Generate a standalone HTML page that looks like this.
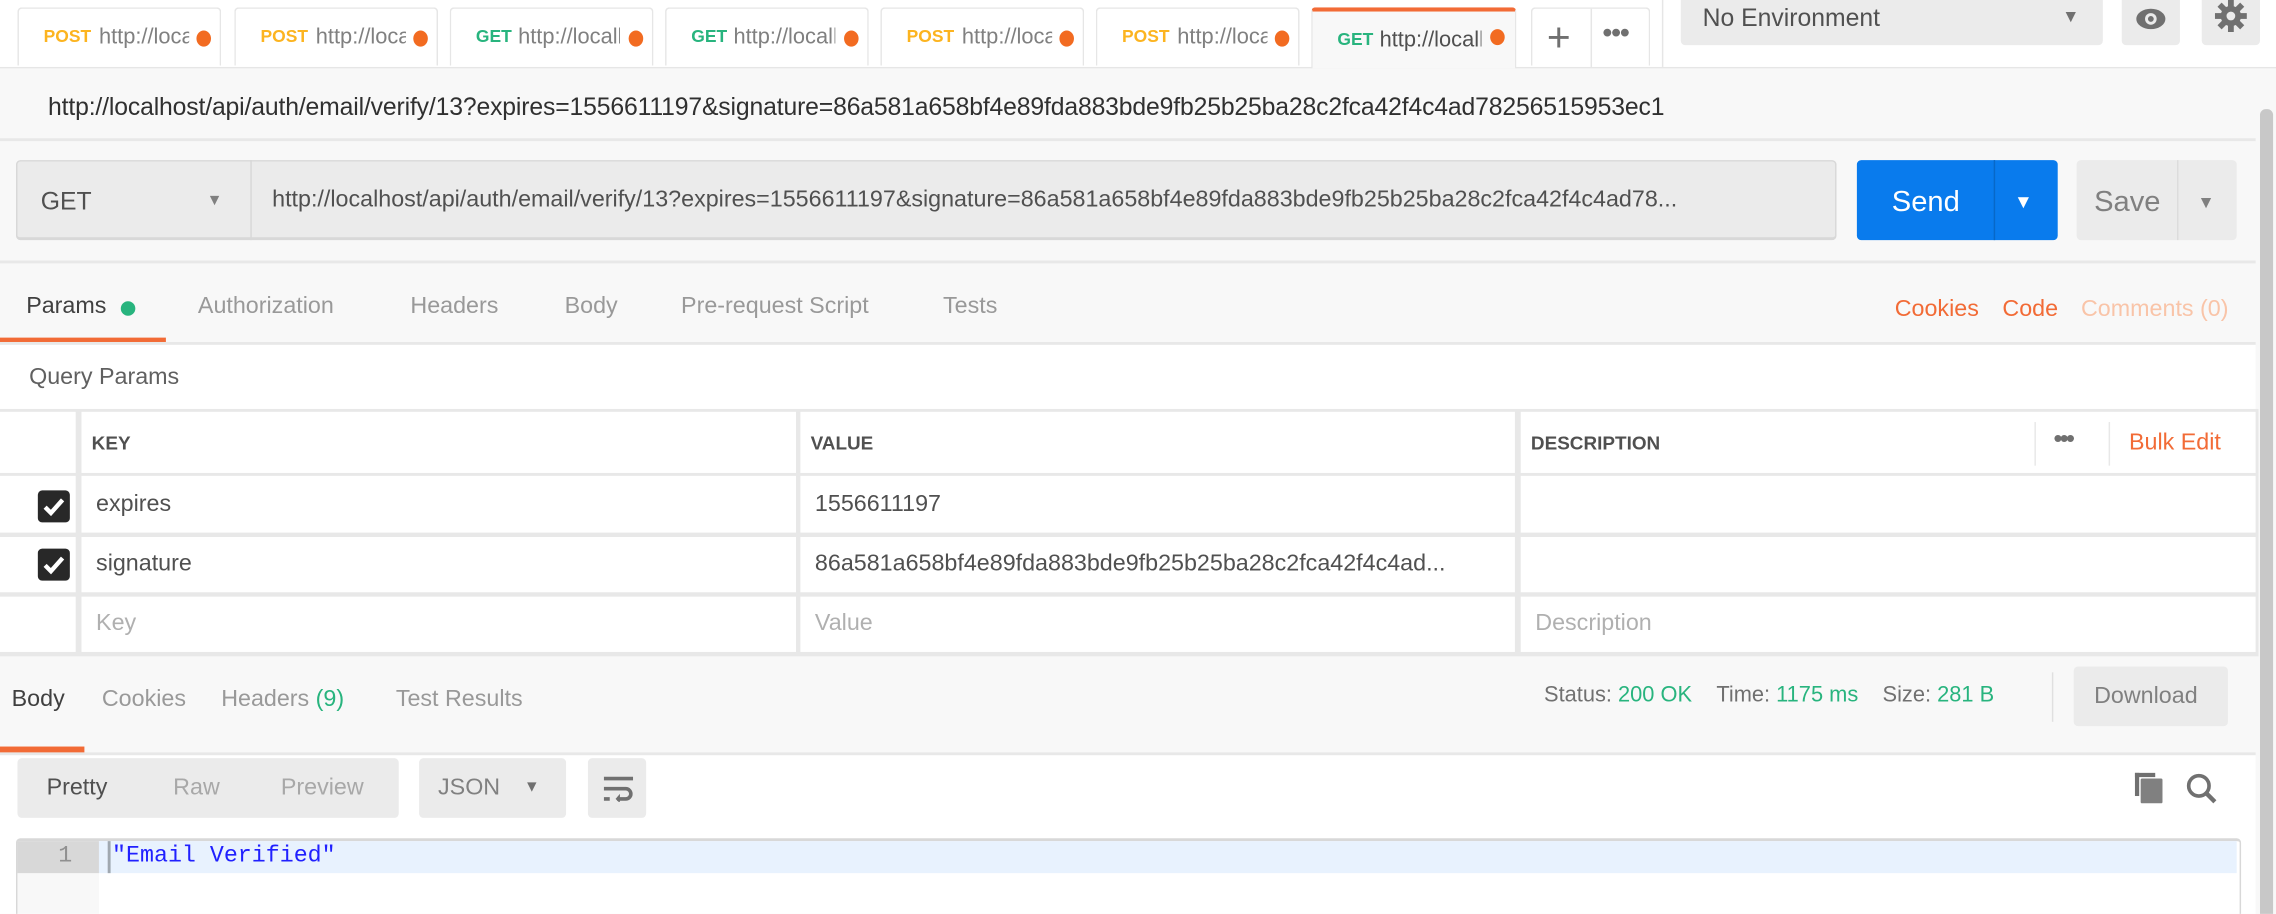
<!DOCTYPE html>
<html><head><meta charset="utf-8"><style>
html,body{margin:0;padding:0;width:2276px;height:914px;overflow:hidden;background:#fff}
#w{position:absolute;left:0;top:0;width:1564px;height:628px;transform:scale(1.45524);transform-origin:0 0;font-family:"Liberation Sans",sans-serif;background:#f8f8f8;overflow:hidden}
.a{position:absolute}
.tab{position:absolute;top:5px;height:40px;width:140px;background:#fff;border:1px solid #e6e6e6;border-bottom:none;border-radius:3px 3px 0 0;font-size:15px;color:#808080;box-sizing:border-box}
.tab .m{position:absolute;left:17px;top:12px;font-size:12px;font-weight:bold}
.tab .u{position:absolute;left:55px;top:11px;width:62px;overflow:hidden;white-space:nowrap}
.tab .d{position:absolute;left:122px;top:15px;width:10px;height:11px;border-radius:50%;background:#f26b21}
.post{color:#fcb420}.get{color:#28b47e}
.g{color:#808080}
.btn{position:absolute;background:#ebebeb;border-radius:3px}
.cell{position:absolute;background:#fff;font-size:16px;color:#505050;box-sizing:border-box;padding-left:10px}
</style></head><body><div id="w">
<div class="a" style="left:0;top:0;width:1564px;height:46px;background:#fff;border-bottom:1px solid #e6e6e6"></div>
<div class="tab" style="left:12px"><span class="m post">POST</span><span class="u">http://localhost</span><span class="d"></span></div>
<div class="tab" style="left:161px"><span class="m post">POST</span><span class="u">http://localhost</span><span class="d"></span></div>
<div class="tab" style="left:309px"><span class="m get">GET</span><span class="u" style="left:46px;width:70px">http://localhost</span><span class="d"></span></div>
<div class="tab" style="left:457px"><span class="m get">GET</span><span class="u" style="left:46px;width:70px">http://localhost</span><span class="d"></span></div>
<div class="tab" style="left:605px"><span class="m post">POST</span><span class="u">http://localhost</span><span class="d"></span></div>
<div class="tab" style="left:753px"><span class="m post">POST</span><span class="u">http://localhost</span><span class="d"></span></div>
<div class="tab" style="left:901px;width:141px;height:42px;background:#f8f8f8;border-top:3px solid #f26b36;z-index:2"><span class="m get" style="top:12px">GET</span><span class="u" style="left:46px;width:70px;color:#505050;top:11px">http://localhost</span><span class="d" style="top:12px"></span></div>
<div class="tab" style="left:1052px;width:82px"><span class="a" style="left:10px;top:4px;font-size:28px;color:#707070">+</span><div class="a" style="left:40px;top:0;width:1px;height:40px;background:#e6e6e6"></div><span class="a" style="left:48px;top:6px;font-size:20px;color:#707070;letter-spacing:-1px">•••</span></div>
<div class="a" style="left:1142px;top:0;width:1px;height:46px;background:#e6e6e6"></div>
<div class="btn" style="left:1155px;top:-4px;width:290px;height:35px"><span class="a" style="left:15px;top:7px;font-size:17px;color:#505050">No Environment</span><span class="a" style="left:262px;top:8px;font-size:12px;color:#707070">▼</span></div>
<div class="btn" style="left:1458px;top:-4px;width:40px;height:35px"><svg class="a" style="left:9px;top:9px" width="22" height="16" viewBox="0 0 22 16"><ellipse cx="11" cy="8" rx="10" ry="7" fill="#707070"/><circle cx="11" cy="8" r="4" fill="#ebebeb"/><circle cx="11" cy="8" r="2" fill="#707070"/></svg></div>
<div class="btn" style="left:1513px;top:-4px;width:40px;height:35px"><svg class="a" style="left:9px;top:4px" width="22" height="22" viewBox="0 0 22 22"><g fill="#707070"><circle cx="11" cy="11" r="7"/><rect x="9" y="0" width="4" height="22"/><rect x="0" y="9" width="22" height="4"/><rect x="9" y="0" width="4" height="22" transform="rotate(45 11 11)"/><rect x="9" y="0" width="4" height="22" transform="rotate(-45 11 11)"/></g><circle cx="11" cy="11" r="3" fill="#ebebeb"/></svg></div>
<div class="a" style="left:1553px;top:75px;width:9px;height:560px;background:#c8c8c8;border-radius:4px"></div>
<div class="a" style="left:33px;top:64px;font-size:17px;color:#303030;white-space:nowrap;letter-spacing:-0.1px">http://localhost/api/auth/email/verify/13?expires=1556611197&amp;signature=86a581a658bf4e89fda883bde9fb25b25ba28c2fca42f4c4ad78256515953ec1</div>
<div class="a" style="left:0;top:95px;width:1550px;height:2px;background:#e8e8e8"></div>
<div class="a" style="left:11px;top:110px;width:1251px;height:55px;background:#ebebeb;border:1px solid #d8d8d8;border-width:1px 1px 2px 1px;border-radius:3px;box-sizing:border-box"></div>
<div class="a" style="left:172px;top:110px;width:1px;height:55px;background:#d8d8d8"></div>
<span class="a" style="left:28px;top:129px;font-size:17px;color:#505050">GET</span>
<span class="a" style="left:142px;top:132px;font-size:11px;color:#808080">▼</span>
<div class="a" style="left:187px;top:129px;width:1060px;font-size:16px;color:#505050;white-space:nowrap;overflow:hidden">http://localhost/api/auth/email/verify/13?expires=1556611197&amp;signature=86a581a658bf4e89fda883bde9fb25b25ba28c2fca42f4c4ad78...</div>
<div class="a" style="left:1276px;top:110px;width:138px;height:55px;background:#097bed;border-radius:3px"></div>
<div class="a" style="left:1370px;top:110px;width:1px;height:55px;background:#0768c8"></div>
<span class="a" style="left:1300px;top:128px;font-size:20px;color:#fff">Send</span>
<span class="a" style="left:1384px;top:131px;font-size:13px;color:#fff">▼</span>
<div class="btn" style="left:1427px;top:110px;width:110px;height:55px"></div>
<div class="a" style="left:1496px;top:110px;width:1px;height:55px;background:#dcdcdc"></div>
<span class="a" style="left:1439px;top:128px;font-size:20px;color:#808080">Save</span>
<span class="a" style="left:1510px;top:132px;font-size:12px;color:#808080">▼</span>
<div class="a" style="left:0;top:179px;width:1550px;height:2px;background:#e8e8e8"></div>
<div class="a" style="left:18px;top:202px;font-size:16px;color:#404040">Params</div>
<div class="a" style="left:83px;top:207px;width:10px;height:10px;border-radius:50%;background:#28b47e"></div>
<div class="a g" style="left:136px;top:202px;font-size:16px;color:#999">Authorization</div>
<div class="a g" style="left:282px;top:202px;font-size:16px;color:#999">Headers</div>
<div class="a g" style="left:388px;top:202px;font-size:16px;color:#999">Body</div>
<div class="a g" style="left:468px;top:202px;font-size:16px;color:#999">Pre-request Script</div>
<div class="a g" style="left:648px;top:202px;font-size:16px;color:#999">Tests</div>
<div class="a" style="left:1302px;top:204px;font-size:16px;color:#f26b36">Cookies</div>
<div class="a" style="left:1376px;top:204px;font-size:16px;color:#f26b36">Code</div>
<div class="a" style="left:1430px;top:204px;font-size:16px;color:#f9c4a8">Comments (0)</div>
<div class="a" style="left:0;top:232px;width:114px;height:4px;background:#f26b36"></div>
<div class="a" style="left:0;top:235px;width:1550px;height:2px;background:#e8e8e8"></div>
<div class="a" style="left:0;top:237px;width:1550px;height:212px;background:#fff"></div>
<div class="a" style="left:20px;top:251px;font-size:16px;color:#606060">Query Params</div>
<div class="a" style="left:0;top:281px;width:1552px;height:170px;background:#e8e8e8"></div>
<div class="cell" style="left:0;top:283px;width:52px;height:42px"></div>
<div class="cell" style="left:56px;top:283px;width:491px;height:42px;padding-top:14px;padding-left:7px;font-size:13px;font-weight:bold;color:#505050">KEY</div>
<div class="cell" style="left:550px;top:283px;width:491px;height:42px;padding-top:14px;font-size:13px;font-weight:bold;color:#505050;padding-left:7px">VALUE</div>
<div class="cell" style="left:1045px;top:283px;width:505px;height:42px;padding-top:14px;font-size:13px;font-weight:bold;color:#505050;padding-left:7px">DESCRIPTION</div>
<div class="a" style="left:1398px;top:290px;width:1px;height:30px;background:#e8e8e8"></div>
<span class="a" style="left:1411px;top:291px;font-size:18px;color:#707070;letter-spacing:-2px">•••</span>
<div class="a" style="left:1449px;top:290px;width:1px;height:30px;background:#e8e8e8"></div>
<span class="a" style="left:1463px;top:296px;font-size:16px;color:#f26b36">Bulk Edit</span>
<div class="cell" style="left:0;top:327px;width:52px;height:39px"><div class="a" style="left:26px;top:10px;width:22px;height:22px;background:#282828;border-radius:3px"><svg width="22" height="22" viewBox="0 0 22 22"><path d="M5 11.5l4 4 8-9" stroke="#fff" stroke-width="3" fill="none"/></svg></div></div>
<div class="cell" style="left:56px;top:327px;width:491px;height:39px;padding-top:11px">expires</div>
<div class="cell" style="left:550px;top:327px;width:491px;height:39px;padding-top:11px">1556611197</div>
<div class="cell" style="left:1045px;top:327px;width:505px;height:39px"></div>
<div class="cell" style="left:0;top:369px;width:52px;height:38px"><div class="a" style="left:26px;top:8px;width:22px;height:22px;background:#282828;border-radius:3px"><svg width="22" height="22" viewBox="0 0 22 22"><path d="M5 11.5l4 4 8-9" stroke="#fff" stroke-width="3" fill="none"/></svg></div></div>
<div class="cell" style="left:56px;top:369px;width:491px;height:38px;padding-top:10px">signature</div>
<div class="cell" style="left:550px;top:369px;width:491px;height:38px;padding-top:10px;white-space:nowrap;overflow:hidden">86a581a658bf4e89fda883bde9fb25b25ba28c2fca42f4c4ad...</div>
<div class="cell" style="left:1045px;top:369px;width:505px;height:38px"></div>
<div class="cell" style="left:0;top:410px;width:52px;height:38px"></div>
<div class="cell" style="left:56px;top:410px;width:491px;height:38px;padding-top:10px;color:#b0b0b0">Key</div>
<div class="cell" style="left:550px;top:410px;width:491px;height:38px;padding-top:10px;color:#b0b0b0">Value</div>
<div class="cell" style="left:1045px;top:410px;width:505px;height:38px;padding-top:10px;color:#b0b0b0">Description</div>
<div class="a" style="left:8px;top:472px;font-size:16px;color:#404040">Body</div>
<div class="a" style="left:70px;top:472px;font-size:16px;color:#999">Cookies</div>
<div class="a" style="left:152px;top:472px;font-size:16px;color:#999">Headers <span style="color:#28b47e">(9)</span></div>
<div class="a" style="left:272px;top:472px;font-size:16px;color:#999">Test Results</div>
<div class="a" style="left:1061px;top:469px;font-size:15px;color:#707070;white-space:nowrap">Status: <span style="color:#28b47e">200 OK</span>&nbsp;&nbsp;&nbsp;&nbsp;Time: <span style="color:#28b47e">1175 ms</span>&nbsp;&nbsp;&nbsp;&nbsp;Size: <span style="color:#28b47e">281 B</span></div>
<div class="a" style="left:1410px;top:462px;width:1px;height:34px;background:#e0e0e0"></div>
<div class="btn" style="left:1425px;top:458px;width:106px;height:41px"><span class="a" style="left:14px;top:12px;font-size:16px;color:#808080">Download</span></div>
<div class="a" style="left:0;top:513px;width:58px;height:5px;background:#f26b36"></div>
<div class="a" style="left:0;top:517px;width:1550px;height:2px;background:#e8e8e8"></div>
<div class="a" style="left:0;top:519px;width:1550px;height:120px;background:#fff"></div>
<div class="btn" style="left:12px;top:521px;width:262px;height:41px"><span class="a" style="left:20px;top:12px;font-size:16px;color:#505050">Pretty</span><span class="a" style="left:107px;top:12px;font-size:16px;color:#a8a8a8">Raw</span><span class="a" style="left:181px;top:12px;font-size:16px;color:#a8a8a8">Preview</span></div>
<div class="btn" style="left:288px;top:521px;width:101px;height:41px"><span class="a" style="left:13px;top:12px;font-size:16px;color:#808080">JSON</span><span class="a" style="left:72px;top:14px;font-size:11px;color:#707070">▼</span></div>
<div class="btn" style="left:404px;top:521px;width:40px;height:41px"><svg class="a" style="left:10px;top:12px" width="22" height="18" viewBox="0 0 22 18"><path d="M1 2h20M1 9h15a3.5 3.5 0 0 1 0 7h-6M1 16h4" stroke="#707070" stroke-width="2.5" fill="none"/><path d="M12 12.5l-3 3.5 3 3z" fill="#707070"/></svg></div>
<svg class="a" style="left:1467px;top:531px" width="22" height="22" viewBox="0 0 22 22"><rect x="0" y="0" width="3" height="16" fill="#707070"/><rect x="0" y="0" width="14" height="3" fill="#707070"/><rect x="4" y="4" width="15" height="17" rx="1" fill="#808080"/></svg>
<svg class="a" style="left:1502px;top:531px" width="22" height="22" viewBox="0 0 22 22"><circle cx="9" cy="9" r="7" stroke="#707070" stroke-width="2.5" fill="none"/><path d="M14 14l6 6" stroke="#707070" stroke-width="3"/></svg>
<div class="a" style="left:11px;top:576px;width:1527px;height:60px;border:1px solid #d8d8d8;border-top-width:2px;border-radius:3px 3px 0 0;background:#fff"></div>
<div class="a" style="left:12px;top:578px;width:56px;height:60px;background:#f8f8f8"></div>
<div class="a" style="left:12px;top:578px;width:56px;height:22px;background:#d8d8d8"></div>
<div class="a" style="left:68px;top:578px;width:1469px;height:22px;background:#e8f2fe"></div>
<div class="a" style="left:74px;top:578px;width:2px;height:22px;background:#a0a8b0"></div>
<span class="a" style="left:40px;top:579px;font-size:16px;color:#909090;font-family:'Liberation Mono',monospace">1</span>
<span class="a" style="left:77px;top:579px;font-size:16px;color:#2020ff;font-family:'Liberation Mono',monospace">"Email Verified"</span>
</div></body></html>
